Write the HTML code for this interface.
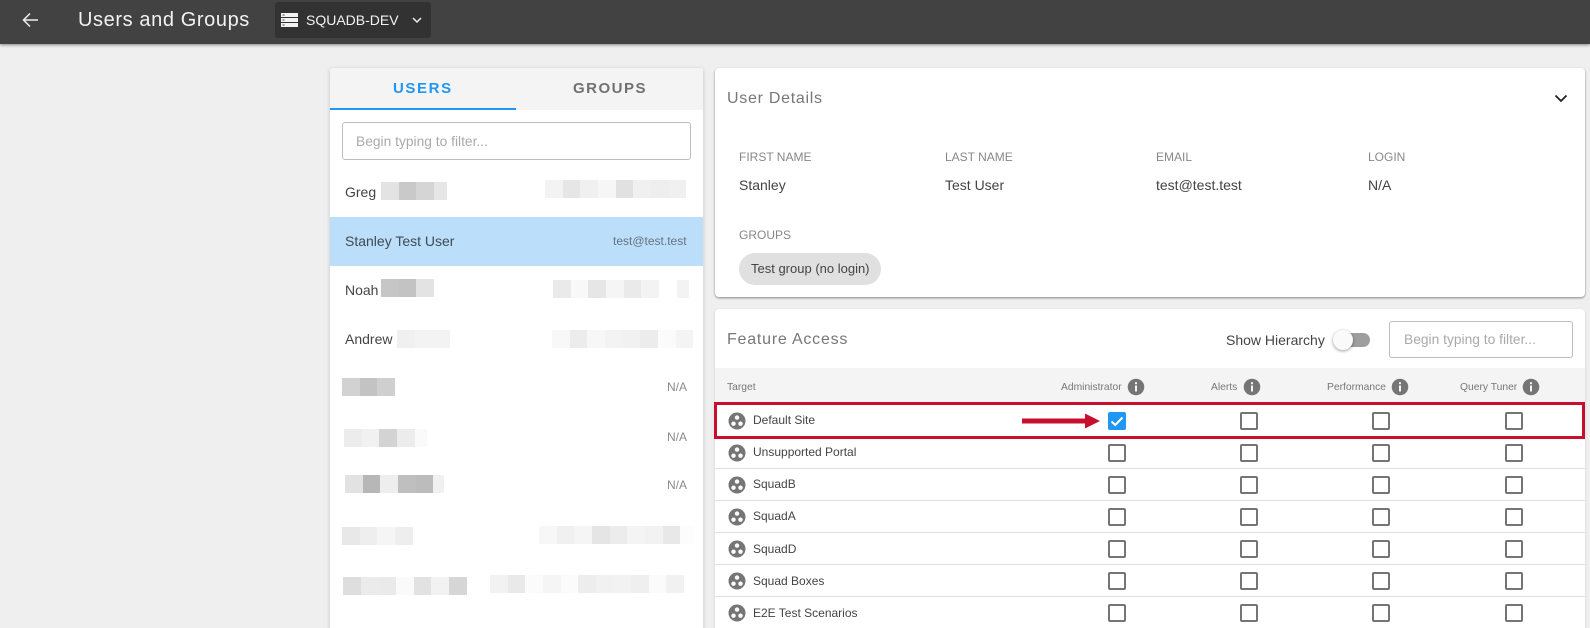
<!DOCTYPE html>
<html><head><meta charset="utf-8"><style>
html,body{margin:0;padding:0;width:1590px;height:628px;overflow:hidden;background:#efefef;font-family:"Liberation Sans",sans-serif}
#p{position:relative;width:1590px;height:628px;overflow:hidden}
.a,.t{position:absolute}
.t{white-space:nowrap;line-height:20px;height:20px}
.cb{position:absolute;box-sizing:border-box;width:18px;height:18px;border:2px solid #757575;border-radius:2px;background:#fff}
.l{position:absolute;left:715px;width:870px;height:1px;background:#e0e0e0}
.r{font-size:12px;color:#444;left:753px}
.h{font-size:10.3px;color:#777}
.lb{font-size:12px;color:#888}
.v{font-size:14px;color:#444}
.u{font-size:14px;color:#444;left:345px}
.n{font-size:12px;color:#8a8a8a;right:903px}
</style></head><body><div id="p">

<div class="a" style="left:0;top:0;width:1590px;height:44px;background:#424242;box-shadow:0 1px 3px rgba(0,0,0,.45)"></div>
<svg class="a" style="left:20px;top:10px" width="20" height="20" viewBox="0 0 20 20"><path d="M18 10H3.500M10 3.500 3.500 10l6.500 6.500" fill="none" stroke="#eee" stroke-width="1.500"/></svg>
<div class="t" style="left:78px;top:10px;font-size:20px;color:#f2f2f2;letter-spacing:.6px">Users and Groups</div>
<div class="a" style="left:275px;top:2px;width:156px;height:36px;background:#323232;border-radius:3px"></div>
<svg class="a" style="left:281px;top:13px" width="17" height="14" viewBox="0 0 17 14"><path d="M0 0h17v4H0zM0 5h17v4H0zM0 10h17v4H0z" fill="#f2f2f2"/><path d="M1.500 1.500h2v1h-2zM1.500 6.500h2v1h-2zM1.500 11.500h2v1h-2z" fill="#444"/></svg>
<div class="t" style="left:306px;top:10px;font-size:14px;color:#f2f2f2">SQUADB-DEV</div>
<svg class="a" style="left:411px;top:15px" width="12" height="10" viewBox="0 0 12 10"><path d="M2 3l4 4 4-4" fill="none" stroke="#eee" stroke-width="1.500"/></svg>

<div class="a" style="left:330px;top:68px;width:373px;height:570px;background:#fff;border-radius:3px 3px 0 0;box-shadow:0 1px 4px rgba(0,0,0,.18)"></div>
<div class="a" style="left:330px;top:68px;width:373px;height:42px;background:#f4f4f4;border-radius:3px 3px 0 0"></div>
<div class="a" style="left:330px;top:108px;width:186px;height:2px;background:#2196f3"></div>
<div class="t" style="left:393px;top:79px;font-size:15px;font-weight:bold;color:#2196f3;letter-spacing:1.600px">USERS</div>
<div class="t" style="left:573px;top:79px;font-size:15px;font-weight:bold;color:#717171;letter-spacing:1.500px">GROUPS</div>
<div class="a" style="left:342px;top:122px;width:347px;height:36px;border:1px solid #bdbdbd;border-radius:3px;background:#fff"></div>
<div class="t" style="left:356px;top:132px;font-size:13.800px;color:#aaa">Begin typing to filter...</div>

<div class="a" style="left:330px;top:217px;width:373px;height:49px;background:#bbdefb"></div>
<div class="t u" style="top:182px">Greg</div>
<div class="t u" style="top:231px;color:#3f4a52">Stanley Test User</div>
<div class="t" style="left:613px;top:231px;font-size:12px;color:#66747f">test@test.test</div>
<div class="t u" style="top:280px">Noah</div>
<div class="t u" style="top:329px">Andrew</div>
<div class="t n" style="top:377px">N/A</div>
<div class="t n" style="top:427px">N/A</div>
<div class="t n" style="top:475px">N/A</div>

<svg class="a" style="left:0;top:0" width="1590" height="628" shape-rendering="crispEdges">
<g transform="translate(381,182)"><rect width="18" height="18" fill="#e3e3e3"/><rect x="18" width="17" height="18" fill="#c9c9c9"/><rect x="35" width="18" height="18" fill="#d5d5d5"/><rect x="53" width="13" height="18" fill="#e6e6e6"/></g>
<g transform="translate(545,180)"><rect width="18" height="18" fill="#f3f3f3"/><rect x="18" width="17" height="18" fill="#e6e6e6"/><rect x="35" width="18" height="18" fill="#f0f0f0"/><rect x="53" width="18" height="18" fill="#f6f6f6"/><rect x="71" width="17" height="18" fill="#e1e1e1"/><rect x="88" width="18" height="18" fill="#f0f0f0"/><rect x="106" width="18" height="18" fill="#eeeeee"/><rect x="124" width="17" height="18" fill="#f0f0f0"/></g>
<g transform="translate(381,279)"><rect width="18" height="18" fill="#c6c6c6"/><rect x="18" width="17" height="18" fill="#c3c3c3"/><rect x="35" width="18" height="18" fill="#e3e3e3"/></g>
<g transform="translate(553,280)"><rect width="18" height="18" fill="#eaeaea"/><rect x="18" width="17" height="18" fill="#f8f8f8"/><rect x="35" width="18" height="18" fill="#e6e6e6"/><rect x="53" width="18" height="18" fill="#f5f5f5"/><rect x="71" width="17" height="18" fill="#eaeaea"/><rect x="88" width="18" height="18" fill="#f3f3f3"/><rect x="124" width="12" height="18" fill="#f3f3f3"/></g>
<g transform="translate(397,330)"><rect width="18" height="18" fill="#f0f0f0"/><rect x="18" width="18" height="18" fill="#f3f3f3"/><rect x="36" width="17" height="18" fill="#f3f3f3"/></g>
<g transform="translate(552,330)"><rect width="18" height="18" fill="#f8f8f8"/><rect x="18" width="17" height="18" fill="#ececec"/><rect x="35" width="18" height="18" fill="#f7f7f7"/><rect x="53" width="18" height="18" fill="#f3f3f3"/><rect x="71" width="17" height="18" fill="#f1f1f1"/><rect x="88" width="18" height="18" fill="#ececec"/><rect x="106" width="18" height="18" fill="#fbfbfb"/><rect x="124" width="17" height="18" fill="#f4f4f4"/></g>
<g transform="translate(342,378)"><rect width="18" height="18" fill="#d2d2d2"/><rect x="18" width="17" height="18" fill="#c3c3c3"/><rect x="35" width="18" height="18" fill="#cfcfcf"/></g>
<g transform="translate(344,429)"><rect width="18" height="18" fill="#ececec"/><rect x="18" width="17" height="18" fill="#f1f1f1"/><rect x="35" width="18" height="18" fill="#d3d3d3"/><rect x="53" width="18" height="18" fill="#ececec"/><rect x="71" width="12" height="18" fill="#fafafa"/></g>
<g transform="translate(345,475)"><rect width="18" height="18" fill="#e2e2e2"/><rect x="18" width="17" height="18" fill="#b7b7b7"/><rect x="35" width="18" height="18" fill="#eeeeee"/><rect x="53" width="18" height="18" fill="#bfbfbf"/><rect x="71" width="17" height="18" fill="#bcbcbc"/><rect x="88" width="11" height="18" fill="#f0f0f0"/></g>
<g transform="translate(342,527)"><rect width="18" height="18" fill="#e8e8e8"/><rect x="18" width="17" height="18" fill="#eeeeee"/><rect x="35" width="18" height="18" fill="#f5f5f5"/><rect x="53" width="18" height="18" fill="#eeeeee"/></g>
<g transform="translate(539,526)"><rect width="18" height="18" fill="#f7f7f7"/><rect x="18" width="17" height="18" fill="#f0f0f0"/><rect x="35" width="18" height="18" fill="#f5f5f5"/><rect x="53" width="18" height="18" fill="#e5e5e5"/><rect x="71" width="17" height="18" fill="#ececec"/><rect x="88" width="18" height="18" fill="#f4f4f4"/><rect x="106" width="18" height="18" fill="#f2f2f2"/><rect x="124" width="17" height="18" fill="#e8e8e8"/><rect x="141" width="14" height="18" fill="#fcfcfc"/></g>
<g transform="translate(343,577)"><rect width="18" height="18" fill="#dedede"/><rect x="18" width="18" height="18" fill="#ebebeb"/><rect x="36" width="17" height="18" fill="#eaeaea"/><rect x="53" width="18" height="18" fill="#fafafa"/><rect x="71" width="17" height="18" fill="#e2e2e2"/><rect x="88" width="18" height="18" fill="#f2f2f2"/><rect x="106" width="18" height="18" fill="#d6d6d6"/></g>
<g transform="translate(490,575)"><rect width="18" height="18" fill="#f2f2f2"/><rect x="18" width="17" height="18" fill="#e9e9e9"/><rect x="35" width="18" height="18" fill="#fbfbfb"/><rect x="53" width="18" height="18" fill="#f5f5f5"/><rect x="71" width="17" height="18" fill="#fbfbfb"/><rect x="88" width="18" height="18" fill="#ededed"/><rect x="106" width="18" height="18" fill="#f1f1f1"/><rect x="124" width="17" height="18" fill="#f2f2f2"/><rect x="141" width="18" height="18" fill="#efefef"/><rect x="159" width="17" height="18" fill="#fbfbfb"/><rect x="176" width="18" height="18" fill="#f1f1f1"/></g>
</svg>

<div class="a" style="left:715px;top:68px;width:870px;height:229px;background:#fff;border-radius:4px;box-shadow:0 1px 2px rgba(0,0,0,.45)"></div>
<div class="t" style="left:727px;top:89px;font-size:16px;color:#777;letter-spacing:.72px">User Details</div>
<svg class="a" style="left:1554px;top:93px" width="14" height="12" viewBox="0 0 14 12"><path d="M1.500 2.500 7 8l5.500-5.500" fill="none" stroke="#222" stroke-width="1.800"/></svg>
<div class="t lb" style="left:739px;top:147px">FIRST NAME</div>
<div class="t lb" style="left:945px;top:147px">LAST NAME</div>
<div class="t lb" style="left:1156px;top:147px">EMAIL</div>
<div class="t lb" style="left:1368px;top:147px">LOGIN</div>
<div class="t v" style="left:739px;top:175px">Stanley</div>
<div class="t v" style="left:945px;top:175px">Test User</div>
<div class="t v" style="left:1156px;top:175px">test@test.test</div>
<div class="t v" style="left:1368px;top:175px">N/A</div>
<div class="t lb" style="left:739px;top:225px">GROUPS</div>
<div class="a" style="left:739px;top:253px;width:142px;height:32px;background:#e0e0e0;border-radius:16px"></div>
<div class="t" style="left:751px;top:259px;font-size:13px;color:#444">Test group (no login)</div>

<div class="a" style="left:715px;top:309px;width:870px;height:330px;background:#fff;border-radius:4px 4px 0 0;box-shadow:0 1px 3px rgba(0,0,0,.12)"></div>
<div class="t" style="left:727px;top:330px;font-size:16px;color:#777;letter-spacing:.78px">Feature Access</div>
<div class="t" style="left:1226px;top:330px;font-size:14px;color:#444">Show Hierarchy</div>
<div class="a" style="left:1342px;top:333px;width:28px;height:14px;background:#9e9e9e;border-radius:7px"></div>
<div class="a" style="left:1333px;top:330px;width:20px;height:20px;background:#fafafa;border-radius:50%;box-shadow:0 1px 3px rgba(0,0,0,.4)"></div>
<div class="a" style="left:1389px;top:321px;width:182px;height:35px;border:1px solid #bdbdbd;border-radius:3px;background:#fff"></div>
<div class="t" style="left:1404px;top:330px;font-size:13.800px;color:#aaa">Begin typing to filter...</div>

<div class="a" style="left:715px;top:368px;width:870px;height:34px;background:#f4f4f4"></div>
<div class="t h" style="left:727px;top:378px">Target</div>
<div class="t h" style="left:1061px;top:378px">Administrator</div>
<div class="t h" style="left:1211px;top:378px">Alerts</div>
<div class="t h" style="left:1327px;top:378px">Performance</div>
<div class="t h" style="left:1460px;top:378px">Query Tuner</div>
<svg class="a" style="left:0;top:0" width="1590" height="628">
<defs>
<g id="i"><circle r="8.300" fill="#757575"/><rect x="-1" y="-1.500" width="2" height="6" fill="#f4f4f4"/><rect x="-1" y="-4.800" width="2" height="2" fill="#f4f4f4"/></g>
<g id="s"><circle r="8.500" fill="#757575"/><circle cx="0" cy="-3.400" r="2.200" fill="#fff"/><circle cx="-3.500" cy="2.700" r="2.200" fill="#fff"/><circle cx="3.500" cy="2.700" r="2.200" fill="#fff"/></g>
</defs>
<use href="#i" x="1136" y="387"/><use href="#i" x="1252" y="387"/><use href="#i" x="1400" y="387"/><use href="#i" x="1531" y="387"/>
<use href="#s" x="737" y="421"/><use href="#s" x="737" y="453"/><use href="#s" x="737" y="485"/><use href="#s" x="737" y="517"/><use href="#s" x="737" y="549"/><use href="#s" x="737" y="581"/><use href="#s" x="737" y="613"/>
</svg>

<div class="l" style="top:468px"></div><div class="l" style="top:500px"></div><div class="l" style="top:532px"></div><div class="l" style="top:564px"></div><div class="l" style="top:596px"></div>

<div class="t r" style="top:410px">Default Site</div>
<div class="t r" style="top:442px">Unsupported Portal</div>
<div class="t r" style="top:474px">SquadB</div>
<div class="t r" style="top:506px">SquadA</div>
<div class="t r" style="top:539px">SquadD</div>
<div class="t r" style="top:571px">Squad Boxes</div>
<div class="t r" style="top:603px">E2E Test Scenarios</div>

<div class="a" style="left:1108px;top:412px;width:18px;height:18px;background:#2196f3;border-radius:2px"></div>
<svg class="a" style="left:1108px;top:412px" width="18" height="18" viewBox="0 0 18 18"><path d="M3.500 9.500 7.300 13l7.200-7.500" fill="none" stroke="#fff" stroke-width="2"/></svg>
<div class="cb" style="left:1108px;top:444px"></div><div class="cb" style="left:1108px;top:476px"></div><div class="cb" style="left:1108px;top:508px"></div><div class="cb" style="left:1108px;top:540px"></div><div class="cb" style="left:1108px;top:572px"></div><div class="cb" style="left:1108px;top:604px"></div>
<div class="cb" style="left:1240px;top:412px"></div><div class="cb" style="left:1240px;top:444px"></div><div class="cb" style="left:1240px;top:476px"></div><div class="cb" style="left:1240px;top:508px"></div><div class="cb" style="left:1240px;top:540px"></div><div class="cb" style="left:1240px;top:572px"></div><div class="cb" style="left:1240px;top:604px"></div>
<div class="cb" style="left:1372px;top:412px"></div><div class="cb" style="left:1372px;top:444px"></div><div class="cb" style="left:1372px;top:476px"></div><div class="cb" style="left:1372px;top:508px"></div><div class="cb" style="left:1372px;top:540px"></div><div class="cb" style="left:1372px;top:572px"></div><div class="cb" style="left:1372px;top:604px"></div>
<div class="cb" style="left:1505px;top:412px"></div><div class="cb" style="left:1505px;top:444px"></div><div class="cb" style="left:1505px;top:476px"></div><div class="cb" style="left:1505px;top:508px"></div><div class="cb" style="left:1505px;top:540px"></div><div class="cb" style="left:1505px;top:572px"></div><div class="cb" style="left:1505px;top:604px"></div>

<div class="a" style="left:714px;top:402px;width:865px;height:31px;border:3px solid #c8102e"></div>
<svg class="a" style="left:1020px;top:410px" width="82" height="22" viewBox="0 0 82 22"><path d="M2 8.500h63V3.500L80 11 65 18.500V13.500H2z" fill="#c8102e"/></svg>

</div></body></html>
